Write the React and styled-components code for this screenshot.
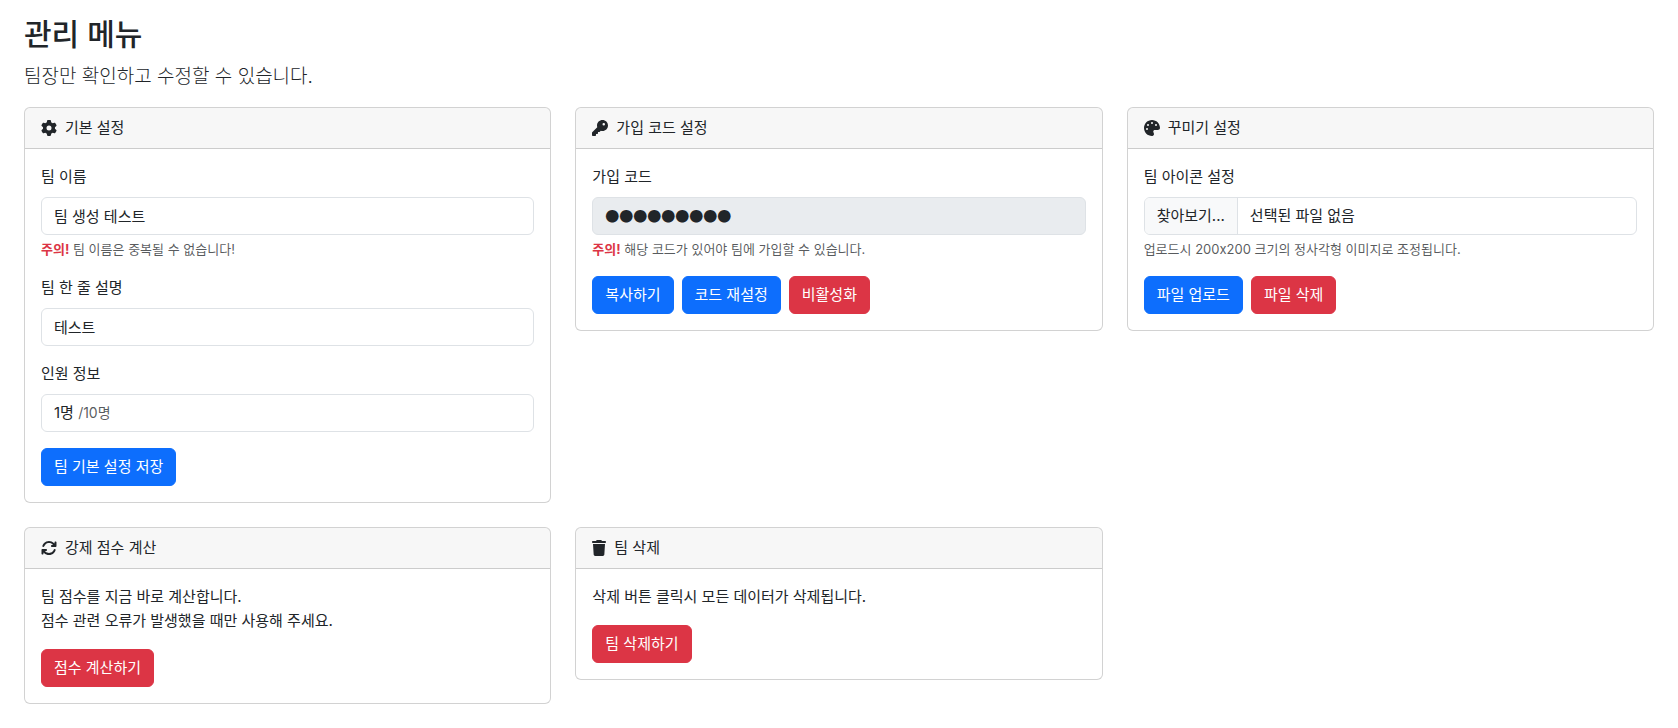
import React from "react";
import styled, { createGlobalStyle } from "styled-components";
import { FaGear, FaKey, FaPalette, FaArrowsRotate, FaTrash } from "react-icons/fa6";

const GlobalStyle = createGlobalStyle`
  *, *::before, *::after { box-sizing: border-box; }
  body {
    margin: 0;
    background: #fff;
    color: #212529;
    font-family: Inter, "Noto Sans CJK KR", sans-serif;
    font-size: 15px;
    line-height: 24px;
  }
  button, input { font: inherit; color: inherit; }
`;

const Page = styled.main`
  padding: 16px 24px 24px;
`;

const Title = styled.h1`
  margin: 0 0 8px;
  font-size: 30px;
  font-weight: 500;
  line-height: 36px;
`;

const Lead = styled.p`
  margin: 0 0 14px;
  font-size: 19px;
  font-weight: 300;
  line-height: 33px;
`;

const CardGrid = styled.div`
  display: grid;
  grid-template-columns: repeat(3, minmax(0, 1fr));
  align-items: start;
  gap: 24px;
`;

const CardBox = styled.section`
  border: 1px solid rgba(0, 0, 0, 0.175);
  border-radius: 6px;
  background: #fff;
`;

const CardHeader = styled.h2`
  display: flex;
  align-items: center;
  gap: 8px;
  margin: 0;
  padding: 8px 16px;
  border-bottom: 1px solid rgba(0, 0, 0, 0.175);
  border-radius: 5px 5px 0 0;
  background: rgba(0, 0, 0, 0.03);
  font-size: 15px;
  font-weight: 400;

  svg {
    flex: none;
    width: ${(p) => p.$iconWidth}px;
    height: 16px;
  }
`;

const CardBody = styled.form`
  display: flex;
  flex-direction: column;
  gap: 16px;
  padding: 16px;
`;

const Field = styled.div`
  display: flex;
  flex-direction: column;
`;

const Label = styled.label`
  margin-bottom: 8px;
`;

const TextInput = styled.input`
  width: 100%;
  height: 38px;
  padding: 5px 12px 7px;
  border: 1px solid #dee2e6;
  border-radius: 6px;
  background: ${(p) => (p.disabled ? "#e9ecef" : "#fff")};
  color: #212529;
  opacity: 1;
`;

const CodeInput = styled(TextInput)`
  font-family: "Noto Sans CJK KR", sans-serif;
  font-size: 14px;
`;

const Readout = styled.output`
  display: block;
  height: 38px;
  padding: 6px 12px;
  border: 1px solid #dee2e6;
  border-radius: 6px;
`;

const Muted = styled.small`
  color: rgba(33, 37, 41, 0.75);
  font-size: 14px;
`;

const Help = styled.div`
  margin-top: 4px;
  color: rgba(33, 37, 41, 0.75);
  font-size: 13px;
  line-height: 21px;
`;

const Warning = styled.strong`
  color: #dc3545;
  font-weight: 700;
`;

const FilePicker = styled.div`
  position: relative;
  display: flex;
  height: 38px;
  overflow: hidden;
  border: 1px solid #dee2e6;
  border-radius: 6px;

  input {
    position: absolute;
    inset: 0;
    width: 100%;
    opacity: 0;
    cursor: pointer;
  }
`;

const FileButton = styled.span`
  padding: 6px 12px;
  border-right: 1px solid #dee2e6;
  background: #f8f9fa;
`;

const FileName = styled.span`
  padding: 6px 12px;
`;

const Message = styled.p`
  margin: 0;
`;

const Actions = styled.div`
  display: flex;
  flex-wrap: wrap;
  gap: 8px;
`;

const Button = styled.button`
  padding: 6px 12px;
  border: 1px solid ${(p) => (p.$danger ? "#dc3545" : "#0d6efd")};
  border-radius: 6px;
  background: ${(p) => (p.$danger ? "#dc3545" : "#0d6efd")};
  color: #fff;
  cursor: pointer;
`;

function Card({ icon: Icon, iconWidth = 16, title, children }) {
  return (
    <CardBox>
      <CardHeader $iconWidth={iconWidth}>
        <Icon aria-hidden="true" />
        {title}
      </CardHeader>
      <CardBody onSubmit={(e) => e.preventDefault()}>{children}</CardBody>
    </CardBox>
  );
}

export default function App() {
  const [fileName, setFileName] = React.useState("");

  return (
    <>
      <GlobalStyle />
      <Page lang="ko">
        <Title>관리 메뉴</Title>
        <Lead>팀장만 확인하고 수정할 수 있습니다.</Lead>
        <CardGrid>
          <Card icon={FaGear} title="기본 설정">
            <Field>
              <Label htmlFor="team-name">팀 이름</Label>
              <TextInput id="team-name" defaultValue="팀 생성 테스트" />
              <Help>
                <Warning>주의!</Warning> 팀 이름은 중복될 수 없습니다!
              </Help>
            </Field>
            <Field>
              <Label htmlFor="team-desc">팀 한 줄 설명</Label>
              <TextInput id="team-desc" defaultValue="테스트" />
            </Field>
            <Field>
              <Label htmlFor="team-members">인원 정보</Label>
              <Readout id="team-members">
                1명 <Muted>/10명</Muted>
              </Readout>
            </Field>
            <Actions>
              <Button type="submit">팀 기본 설정 저장</Button>
            </Actions>
          </Card>

          <Card icon={FaKey} title="가입 코드 설정">
            <Field>
              <Label htmlFor="join-code">가입 코드</Label>
              <CodeInput id="join-code" disabled defaultValue="●●●●●●●●●" />
              <Help>
                <Warning>주의!</Warning> 해당 코드가 있어야 팀에 가입할 수 있습니다.
              </Help>
            </Field>
            <Actions>
              <Button type="button">복사하기</Button>
              <Button type="button">코드 재설정</Button>
              <Button type="button" $danger>비활성화</Button>
            </Actions>
          </Card>

          <Card icon={FaPalette} title="꾸미기 설정">
            <Field>
              <Label htmlFor="team-icon">팀 아이콘 설정</Label>
              <FilePicker>
                <FileButton aria-hidden="true">찾아보기...</FileButton>
                <FileName>{fileName || "선택된 파일 없음"}</FileName>
                <input
                  id="team-icon"
                  type="file"
                  accept="image/*"
                  onChange={(e) => setFileName(e.target.files[0]?.name ?? "")}
                />
              </FilePicker>
              <Help>업로드시 200x200 크기의 정사각형 이미지로 조정됩니다.</Help>
            </Field>
            <Actions>
              <Button type="submit">파일 업로드</Button>
              <Button type="button" $danger>파일 삭제</Button>
            </Actions>
          </Card>

          <Card icon={FaArrowsRotate} title="강제 점수 계산">
            <Message>
              팀 점수를 지금 바로 계산합니다.
              <br />
              점수 관련 오류가 발생했을 때만 사용해 주세요.
            </Message>
            <Actions>
              <Button type="button" $danger>점수 계산하기</Button>
            </Actions>
          </Card>

          <Card icon={FaTrash} iconWidth={14} title="팀 삭제">
            <Message>삭제 버튼 클릭시 모든 데이터가 삭제됩니다.</Message>
            <Actions>
              <Button type="button" $danger>팀 삭제하기</Button>
            </Actions>
          </Card>
        </CardGrid>
      </Page>
    </>
  );
}
